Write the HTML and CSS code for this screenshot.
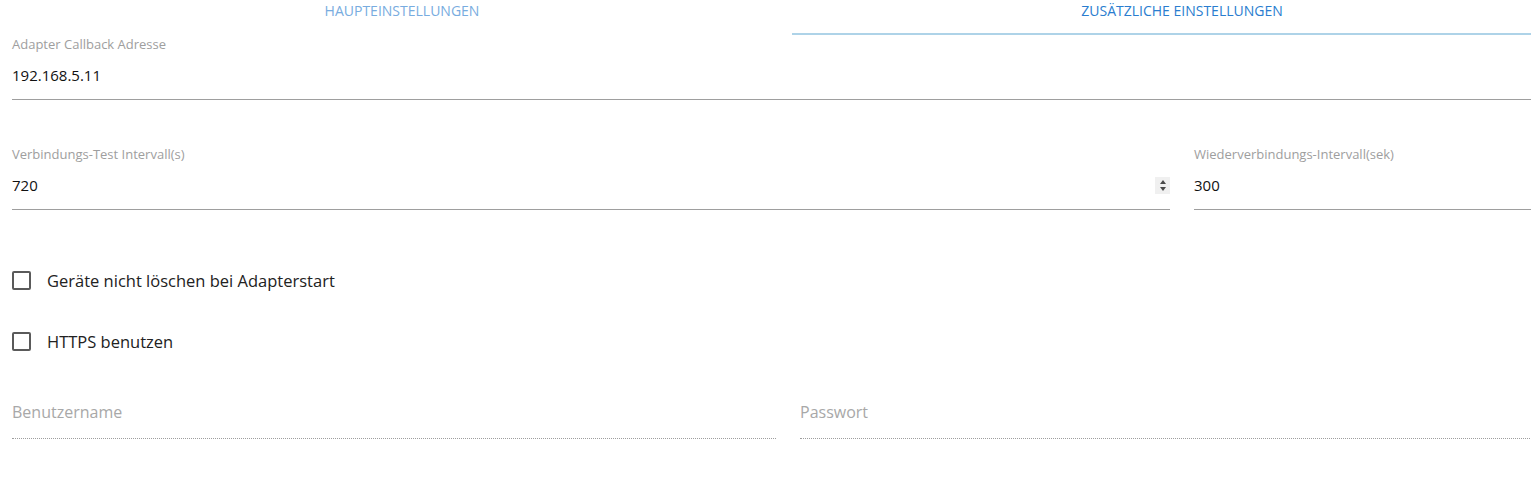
FILE: index.html
```html
<!DOCTYPE html>
<html lang="de">
<head>
    <meta charset="UTF-8">
    <meta name="viewport" content="width=device-width, initial-scale=1.0">
    <title>Adapter Einstellungen</title>
    <link rel="stylesheet" href="styles.css">
</head>
<body>
    <div class="page">
        <div class="tabs">
            <div class="tab">Haupteinstellungen</div>
            <div class="tab active">Zusätzliche Einstellungen</div>
        </div>

        <div class="row">
            <div class="field col-12">
                <label for="callback">Adapter Callback Adresse</label>
                <div class="input-wrap">
                    <input type="text" id="callback" value="192.168.5.11">
                </div>
            </div>
        </div>

        <div class="row row-gap">
            <div class="field col-9">
                <label for="testInterval">Verbindungs-Test Intervall(s)</label>
                <div class="input-wrap">
                    <input type="text" id="testInterval" value="720">
                    <span class="spinner"><i class="up"></i><i class="down"></i></span>
                </div>
            </div>
            <div class="field col-3">
                <label for="reconnect">Wiederverbindungs-Intervall(sek)</label>
                <div class="input-wrap">
                    <input type="text" id="reconnect" value="300">
                </div>
            </div>
        </div>

        <div class="checks">
            <label class="check"><span class="box"></span>Geräte nicht löschen bei Adapterstart</label>
            <label class="check"><span class="box"></span>HTTPS benutzen</label>
        </div>

        <div class="row">
            <div class="field col-6">
                <input type="text" class="plain" placeholder="Benutzername">
            </div>
            <div class="field col-6">
                <input type="password" class="plain" placeholder="Passwort">
            </div>
        </div>
    </div>
</body>
</html>
```

FILE: styles.css
```css
body {
    margin: 0;
    padding: 0;
    background: #ffffff;
    overflow: hidden;
    font-family: "Open Sans", "Noto Sans", sans-serif;
    color: #222222;
}
.page {
    width: 1576px;
}
.tabs {
    display: flex;
    margin: 0 4px 0 12px;
}
.tab {
    flex: 1;
    height: 33px;
    padding-top: 3px;
    box-sizing: border-box;
    text-align: center;
    text-transform: uppercase;
    font-size: 14px;
    line-height: 16px;
    color: #78ace0;
}
.tab.active {
    height: 35px;
    color: #2a7dcf;
    border-bottom: 2px solid #aed3e8;
}
.row {
    display: flex;
}
.row-gap {
    margin-top: 45px;
}
.field {
    padding: 0 12px;
    box-sizing: border-box;
}
.col-12 { width: 100%; }
.col-9 { width: 75%; }
.col-6 { width: 50%; }
.col-3 { width: 25%; }
.field label {
    display: block;
    margin-top: 1px;
    font-size: 13px;
    line-height: 16px;
    color: #9e9e9e;
}
.input-wrap {
    display: flex;
    align-items: center;
    border-bottom: 1px solid #9e9e9e;
}
input {
    flex: 1;
    min-width: 0;
    height: 20px;
    margin: 0;
    padding: 13px 0 14px;
    border: none;
    outline: none;
    background: transparent;
    font-family: inherit;
    font-size: 15px;
    color: #111111;
}
.spinner {
    display: flex;
    flex-direction: column;
    align-items: center;
    justify-content: center;
    gap: 3px;
    width: 15px;
    height: 17px;
    background: #f0f0f0;
}
.spinner i {
    width: 0;
    height: 0;
    border-left: 3.5px solid transparent;
    border-right: 3.5px solid transparent;
}
.spinner .up {
    border-bottom: 4px solid #4a4a4a;
}
.spinner .down {
    border-top: 4px solid #4a4a4a;
}
.checks {
    margin-top: 58px;
    padding: 0 12px;
    display: flex;
    flex-direction: column;
    gap: 37px;
}
.check {
    display: flex;
    align-items: center;
    gap: 16px;
    height: 24px;
    font-size: 16.5px;
    color: #222222;
}
.box {
    width: 19px;
    height: 19px;
    box-sizing: border-box;
    border: 2px solid #5a5a5a;
    border-radius: 2px;
}
.plain {
    width: 100%;
    margin-top: 49px;
    padding: 0 0 16px;
    border-bottom: 1px dotted #9e9e9e;
    font-size: 16px;
}
.plain::placeholder {
    color: #a8a8a8;
}
```
